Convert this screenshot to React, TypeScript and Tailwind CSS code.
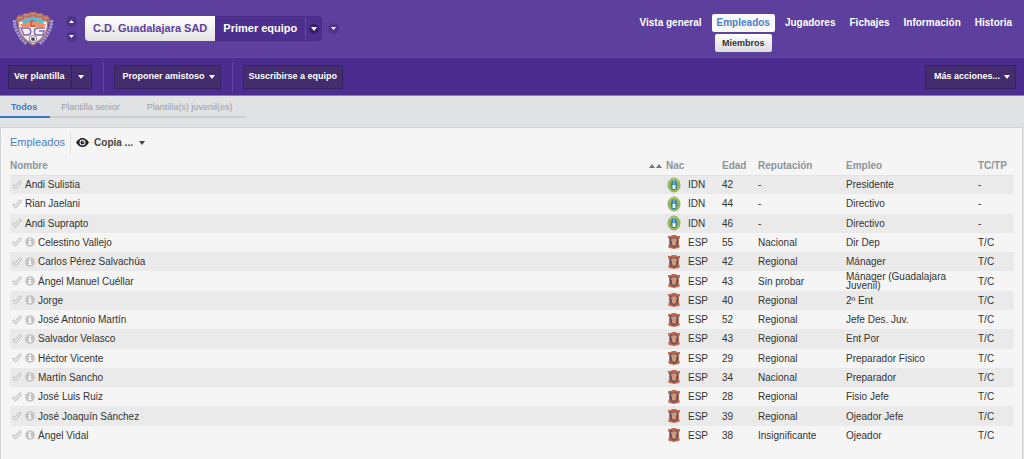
import React from 'react';

type Staff = {
  name: string;
  info?: boolean;
  nac: 'IDN' | 'ESP';
  age: number;
  rep: string;
  job: string;
  tc: string;
};

const staff: Staff[] = [
  { name: 'Andi Sulistia', nac: 'IDN', age: 42, rep: '-', job: 'Presidente', tc: '-' },
  { name: 'Rian Jaelani', nac: 'IDN', age: 44, rep: '-', job: 'Directivo', tc: '-' },
  { name: 'Andi Suprapto', nac: 'IDN', age: 46, rep: '-', job: 'Directivo', tc: '-' },
  { name: 'Celestino Vallejo', info: true, nac: 'ESP', age: 55, rep: 'Nacional', job: 'Dir Dep', tc: 'T/C' },
  { name: 'Carlos Pérez Salvachúa', info: true, nac: 'ESP', age: 42, rep: 'Regional', job: 'Mánager', tc: 'T/C' },
  { name: 'Ángel Manuel Cuéllar', info: true, nac: 'ESP', age: 43, rep: 'Sin probar', job: 'Mánager (Guadalajara Juvenil)', tc: 'T/C' },
  { name: 'Jorge', info: true, nac: 'ESP', age: 40, rep: 'Regional', job: '2º Ent', tc: 'T/C' },
  { name: 'José Antonio Martín', info: true, nac: 'ESP', age: 52, rep: 'Regional', job: 'Jefe Des. Juv.', tc: 'T/C' },
  { name: 'Salvador Velasco', info: true, nac: 'ESP', age: 43, rep: 'Regional', job: 'Ent Por', tc: 'T/C' },
  { name: 'Héctor Vicente', info: true, nac: 'ESP', age: 29, rep: 'Regional', job: 'Preparador Fisico', tc: 'T/C' },
  { name: 'Martín Sancho', info: true, nac: 'ESP', age: 34, rep: 'Nacional', job: 'Preparador', tc: 'T/C' },
  { name: 'José Luis Ruiz', info: true, nac: 'ESP', age: 28, rep: 'Regional', job: 'Fisio Jefe', tc: 'T/C' },
  { name: 'José Joaquín Sánchez', info: true, nac: 'ESP', age: 39, rep: 'Regional', job: 'Ojeador Jefe', tc: 'T/C' },
  { name: 'Ángel Vidal', info: true, nac: 'ESP', age: 38, rep: 'Insignificante', job: 'Ojeador', tc: 'T/C' },
];

const Arrow = ({ up = false }: { up?: boolean }) => (
  <svg width="6" height="4" viewBox="0 0 6 4" fill="currentColor" className="shrink-0" aria-hidden="true">
    <path d={up ? 'M0 4h6L3 0z' : 'M0 0h6L3 4z'} />
  </svg>
);

const RoundArrow = ({ up = false, label }: { up?: boolean; label: string }) => (
  <button
    aria-label={label}
    className="flex size-[11px] items-center justify-center rounded-full bg-[#4f338b] text-white"
  >
    <svg width="5" height="3" viewBox="0 0 5 3" fill="currentColor">
      <path d={up ? 'M0 3h5L2.5 0z' : 'M0 0h5L2.5 3z'} />
    </svg>
  </button>
);

const ClubBadge = () => (
  <svg width="42" height="36" viewBox="0 0 42 36" role="img" aria-label="C.D. Guadalajara" className="shrink-0">
    <g fill="none" stroke="#a395cf" strokeWidth="3.4" strokeDasharray="2.4 .7">
      <path d="M2.5 9c0 6 1 8 3 12s4 7 9 12" />
      <path d="M39.5 9c0 6-1 8-3 12s-4 7-9 12" />
    </g>
    <path d="M6 9c8-5 22-5 30 0l-1 9c-2 8-8 12-14 16C15 30 9 26 7 18z" fill="#f4f0f5" stroke="#b07a6c" strokeWidth="1.2" />
    <path d="m4 7 3-3 3 .5L12 2l4 .5L18 1h6l2 1.5L30 2l2 2.5L35 4l3 3-1 5-5-2C26 6 16 6 10 10l-5 2z" fill="#b5725c" />
    <path d="M6 7h4m2-3h5m2-1h4m2 1h5m2 3h4M12 7h5m2-1h4m2 1h5" stroke="#d59c83" strokeWidth="1" />
    <path d="M10 10c6-4 16-4 22 0l-1 3H11z" fill="#43c0ea" />
    <path d="M8 13c4 0 6-2 9-2l4-1 4 1c3 0 5 2 9 2l-2 3H10z" fill="#eb9161" />
    <path d="M22 10h-3v5h4" fill="none" stroke="#cf5239" strokeWidth="1.4" />
    <path d="M9 17h6c5 0 5 7 0 7h-3l-3-7zM33 17h-7c-5 0-5 7 0 7h5l1-4h-5" fill="none" stroke="#8467b4" strokeWidth="1.5" />
    <circle cx="21" cy="28" r="3.8" fill="#fff" stroke="#6b627e" strokeWidth=".8" />
    <path d="m21 26.5 1.7 1.2-.7 1.9h-2l-.7-1.9zM18.5 25.5l1 .8m4-.8-1 .8m-4.5 4 1-.8m4 .8-1-.8" fill="#484354" stroke="#484354" strokeWidth=".7" />
  </svg>
);

const Tick = () => (
  <svg width="10" height="10" viewBox="0 0 10 10" className="shrink-0" aria-hidden="true">
    <path
      d="M.7 6.2C.7 4.8 2.5 4.5 3.4 5.8L7.3 1.3C8.3.3 9.9 1.5 9 2.7L4.7 8.2C4 9 3 9 2.4 8.3z"
      fill="#e8e8e8"
      stroke="#bcbcbc"
      strokeWidth="1"
      strokeLinejoin="round"
    />
  </svg>
);

const Info = () => (
  <svg width="10" height="10" viewBox="0 0 10 10" className="shrink-0" aria-hidden="true">
    <circle cx="5" cy="5" r="4.8" fill="#c4c4c4" />
    <path d="M4.1 1.8h1.8v1.5H4.1zM3.5 4h2.4v3h.7v1H3.5V7h.7V5h-.7z" fill="#fff" />
  </svg>
);

const Crest = ({ nac }: { nac: string }) =>
  nac === 'IDN' ? (
    <svg width="14" height="16" viewBox="0 0 14 16" className="shrink-0" aria-hidden="true">
      <ellipse cx="7" cy="8" rx="6" ry="7" fill="#9abb4a" stroke="#8da872" strokeWidth="1" />
      <path d="M2.5 4C4 2.5 5 2 7 2s3 .5 4.5 2" fill="none" stroke="#c1cf63" strokeWidth="1" />
      <path d="M4 7c0-2 1-3 2-4h2c1 1 2 2 2 4l.5 2L9 13H5L3.500 9z" fill="#3580a8" />
      <path d="M6 3h2v4H6z" fill="#69acd2" />
      <path d="m7 7 .8 1.5h1.5L8.200 10l.3 2h-3l.3-2-1.100-1.500h1.500z" fill="#f2f8f4" />
    </svg>
  ) : (
    <svg width="14" height="16" viewBox="0 0 14 16" className="shrink-0" aria-hidden="true">
      <path d="M1 2h3l1-1h4l1 1h3v2l-1 1v6l1 1-1 2-3 .5L7 15l-2-.5L2 14l-1-2 1-1V5L1 4z" fill="#c4694f" />
      <path d="M3 3.500h8V10c0 2-2 3-4 4-2-1-4-2-4-4z" fill="#70565c" />
      <path d="M5 4.500h4v6L7 12l-2-1.500z" fill="#d99673" />
      <path d="M4 5h1.500v2H4zM8.500 5H10v2H8.500z" fill="#8797a8" />
    </svg>
  );

const Eye = () => (
  <svg width="13" height="9" viewBox="0 0 13 9" aria-hidden="true">
    <path d="M0 4.5C2 1.5 4 0 6.5 0S11 1.5 13 4.5C11 7.5 9 9 6.5 9S2 7.5 0 4.5z" fill="#1e1e1e" />
    <circle cx="6.5" cy="4.5" r="3" fill="#fff" />
    <circle cx="6.5" cy="4.5" r="2" fill="#1e1e1e" />
    <circle cx="7" cy="4" r=".7" fill="#fff" />
  </svg>
);

const darkBtn =
  'flex h-6 items-center rounded-xs border border-[#35235f] bg-[#432d6f] text-white shadow-[0_0_1px_#33205c]';

const Header = () => (
  <header className="flex h-[58px] justify-between border-b border-[#644aa5] bg-[#5d409e] pr-3 text-white">
    <div className="flex items-center pl-3">
      <ClubBadge />
      <div className="ml-3 flex flex-col gap-1">
        <RoundArrow up label="Equipo anterior" />
        <RoundArrow label="Equipo siguiente" />
      </div>
      <div className="ml-2 flex h-[25px] overflow-hidden rounded text-[11px] font-bold">
        <h1 className="flex items-center bg-linear-to-b from-white to-[#e3e3e5] px-2 text-[#5d409e]">C.D. Guadalajara SAD</h1>
        <button className="flex items-center rounded-r border border-l-0 border-[#492c85] bg-[#4d2f90]">
          <span className="px-2">Primer equipo</span>
          <span className="flex h-full w-4 items-center justify-center border-l border-[#634aa1]">
            <span className="flex size-[10px] items-center justify-center rounded-full bg-[#382067]">
              <Arrow />
            </span>
          </span>
        </button>
      </div>
      <div className="ml-1.5">
        <RoundArrow label="Más equipos" />
      </div>
    </div>
    <nav className="flex gap-2 pt-3.5 text-[10px] font-bold">
      <a href="#general" className="h-[18px] px-0.5 leading-[18px]">Vista general</a>
      <div className="flex flex-col items-center gap-0.5">
        <a href="#empleados" className="h-[18px] rounded-xs bg-[#fafafc] px-[5px] leading-[18px] text-[#4b7ecb]">Empleados</a>
        <a href="#miembros" className="h-[18px] rounded-xs bg-linear-to-b from-white to-[#d9dce0] px-[7px] text-[9px] leading-[18px] text-[#333]">
          Miembros
        </a>
      </div>
      <a href="#jugadores" className="h-[18px] px-0.5 leading-[18px]">Jugadores</a>
      <a href="#fichajes" className="h-[18px] pr-0.5 pl-1 leading-[18px]">Fichajes</a>
      <a href="#informacion" className="h-[18px] px-1 leading-[18px]">Información</a>
      <a href="#historia" className="h-[18px] pl-0.5 leading-[18px]">Historia</a>
    </nav>
  </header>
);

const Toolbar = () => (
  <div className="flex h-[38px] items-center border-b border-[#8d7bb7] bg-[#4d2c90] px-2 text-[9px] font-bold">
    <div className={darkBtn}>
      <button className="h-full pr-1.5 pl-[5px]">Ver plantilla</button>
      <button aria-label="Opciones de plantilla" className="flex h-full w-5 items-center justify-center border-l border-[#30205b]">
        <Arrow />
      </button>
    </div>
    <div className="mr-[10px] ml-[11px] h-[30px] w-px bg-[#62459e]" />
    <button className={`${darkBtn} gap-1 pr-[5px] pl-2`}>
      Proponer amistoso <Arrow />
    </button>
    <div className="mr-[10px] ml-[11px] h-[30px] w-px bg-[#62459e]" />
    <button className={`${darkBtn} px-[5px]`}>Suscribirse a equipo</button>
    <button className={`${darkBtn} ml-auto gap-1 pr-[5px] pl-2`}>
      Más acciones... <Arrow />
    </button>
  </div>
);

const StaffTable = () => (
  <table className="h-[288px] w-full table-fixed border-collapse text-left text-[10px] text-[#333]">
    <colgroup>
      <col />
      <col className="w-[73px]" />
      <col className="w-9" />
      <col className="w-[88px]" />
      <col className="w-[132px]" />
      <col className="w-9" />
    </colgroup>
    <thead className="text-[#8d949b]">
      <tr className="h-[18px] border-b border-[#e2e2e2]">
        <th>Nombre</th>
        <th>
          <button className="flex items-center">
            <span className="mr-1 flex gap-px text-[#707780]">
              <Arrow up />
              <Arrow up />
            </span>
            Nac
          </button>
        </th>
        <th>Edad</th>
        <th>Reputación</th>
        <th>Empleo</th>
        <th>TC/TP</th>
      </tr>
    </thead>
    <tbody>
      {staff.map((s) => (
        <tr key={s.name} className="h-[19px] odd:bg-[#eaeaea]">
          <td className="pl-0.5">
            <div className="flex items-center gap-[3px]">
              <Tick />
              {s.info && <Info />}
              <a href="#persona">{s.name}</a>
            </div>
          </td>
          <td className="pl-[18px]">
            <div className="flex h-4 items-center gap-[7px]">
              <Crest nac={s.nac} />
              {s.nac}
            </div>
          </td>
          <td>{s.age}</td>
          <td>{s.rep}</td>
          <td className="pr-6 leading-[9px]">{s.job}</td>
          <td>{s.tc}</td>
        </tr>
      ))}
    </tbody>
  </table>
);

export default function App() {
  return (
    <div className="flex min-h-screen flex-col bg-[#e1e2e3] font-['Liberation_Sans',Arial,sans-serif]">
      <Header />
      <Toolbar />
      <nav className="flex h-[22px] self-start border-b-2 border-[#cdced0] text-[9px] leading-[22px] text-[#9b9fa4]">
        <a href="#todos" className="h-[22px] border-b-2 border-[#3d74c3] pr-[13px] pl-[11px] font-bold text-[#4278c5]">Todos</a>
        <a href="#senior" className="pr-[13px] pl-[11px]">Plantilla senior</a>
        <a href="#juvenil" className="px-3.5">Plantilla(s) juvenil(es)</a>
      </nav>
      <main className="mt-[9px] mr-px flex-1 border border-b-0 border-[#d2d3d4] bg-[#f5f5f5] pr-2 pl-[9px]">
        <div className="flex h-[29px] items-center">
          <h2 className="pr-[5px] text-[11px] text-[#4b7ecb]">Empleados</h2>
          <button className="flex h-[22px] items-center border-l border-[#dfdfdf] pl-[5px] text-[10px] font-bold text-[#444]">
            <Eye />
            <span className="mr-1.5 ml-[5px]">Copia ...</span>
            <Arrow />
          </button>
        </div>
        <StaffTable />
      </main>
    </div>
  );
}
